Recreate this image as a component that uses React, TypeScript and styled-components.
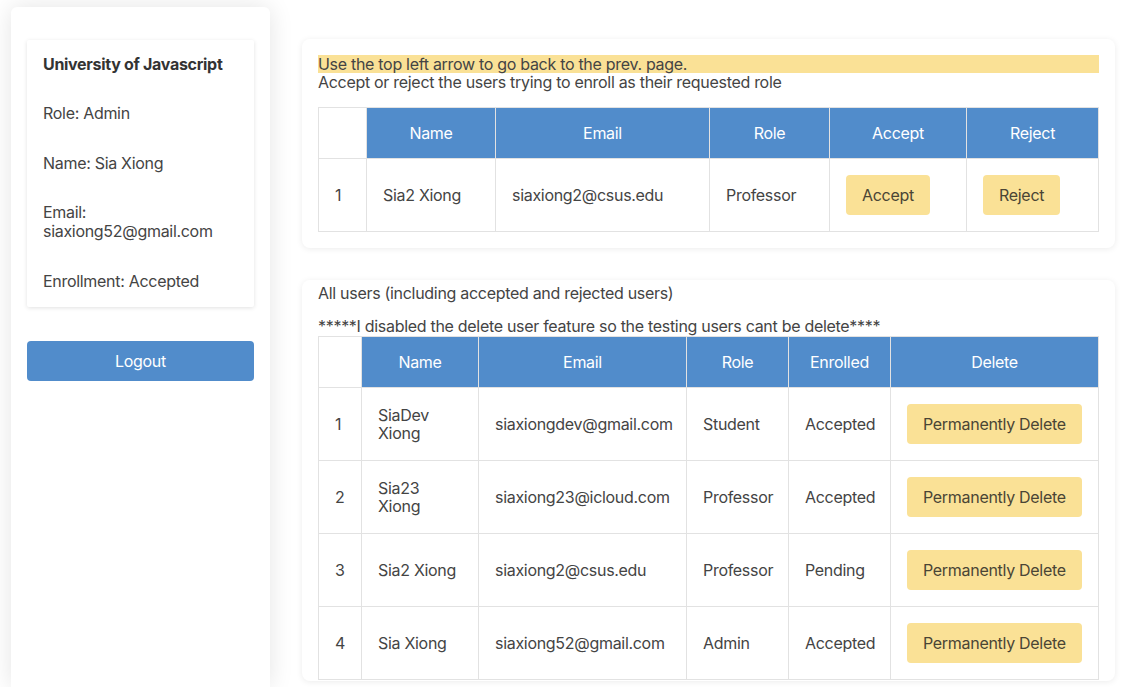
import styled, { createGlobalStyle } from 'styled-components';

const GlobalStyle = createGlobalStyle`
  * { box-sizing: border-box; }
  body {
    margin: 0;
    background: #fff;
    font-family: Inter, "Noto Sans", sans-serif;
    font-size: 16px;
    letter-spacing: -0.3px;
    color: #444;
  }
`;

interface IPending {
  name: string;
  email: string;
  role: string;
}

interface IUser extends IPending {
  enrolled: string;
}

const pending: IPending[] = [
  { name: 'Sia2 Xiong', email: 'siaxiong2@csus.edu', role: 'Professor' }
];

const users: IUser[] = [
  { name: 'SiaDev Xiong', email: 'siaxiongdev@gmail.com', role: 'Student', enrolled: 'Accepted' },
  { name: 'Sia23 Xiong', email: 'siaxiong23@icloud.com', role: 'Professor', enrolled: 'Accepted' },
  { name: 'Sia2 Xiong', email: 'siaxiong2@csus.edu', role: 'Professor', enrolled: 'Pending' },
  { name: 'Sia Xiong', email: 'siaxiong52@gmail.com', role: 'Admin', enrolled: 'Accepted' }
];

export default function App() {
  return (
    <>
      <GlobalStyle />
      <Page>
        <Sidebar>
          <ProfileCard>
            <ProfileTitle>University of Javascript</ProfileTitle>
            <ProfileItem>Role: Admin</ProfileItem>
            <ProfileItem>Name: Sia Xiong</ProfileItem>
            <ProfileItem>
              Email:
              <br />
              siaxiong52@gmail.com
            </ProfileItem>
            <ProfileItem>Enrollment: Accepted</ProfileItem>
          </ProfileCard>
          <LogoutButton>Logout</LogoutButton>
        </Sidebar>

        <Main>
          <Card>
            <Highlight>Use the top left arrow to go back to the prev. page.</Highlight>
            <Note>Accept or reject the users trying to enroll as their requested role</Note>
            <Table $top={15}>
              <colgroup>
                <col style={{ width: 48 }} />
                <col style={{ width: 129 }} />
                <col style={{ width: 214 }} />
                <col style={{ width: 120 }} />
                <col style={{ width: 137 }} />
                <col />
              </colgroup>
              <thead>
                <tr>
                  <Th $blank />
                  <Th>Name</Th>
                  <Th>Email</Th>
                  <Th>Role</Th>
                  <Th>Accept</Th>
                  <Th>Reject</Th>
                </tr>
              </thead>
              <tbody>
                {pending.map((u, i) => (
                  <tr key={u.email}>
                    <Td>{i + 1}</Td>
                    <Td>{u.name}</Td>
                    <Td>{u.email}</Td>
                    <Td>{u.role}</Td>
                    <Td>
                      <ActionButton>Accept</ActionButton>
                    </Td>
                    <Td>
                      <ActionButton>Reject</ActionButton>
                    </Td>
                  </tr>
                ))}
              </tbody>
            </Table>
          </Card>

          <Card $compact>
            <Note>All users (including accepted and rejected users)</Note>
            <Note $top={15}>*****I disabled the delete user feature so the testing users cant be delete****</Note>
            <Table>
              <colgroup>
                <col style={{ width: 43 }} />
                <col style={{ width: 117 }} />
                <col style={{ width: 208 }} />
                <col style={{ width: 102 }} />
                <col style={{ width: 102 }} />
                <col />
              </colgroup>
              <thead>
                <tr>
                  <Th $blank />
                  <Th>Name</Th>
                  <Th>Email</Th>
                  <Th>Role</Th>
                  <Th>Enrolled</Th>
                  <Th>Delete</Th>
                </tr>
              </thead>
              <tbody>
                {users.map((u, i) => (
                  <tr key={u.email}>
                    <Td>{i + 1}</Td>
                    <Td>{u.name}</Td>
                    <Td>{u.email}</Td>
                    <Td>{u.role}</Td>
                    <Td>{u.enrolled}</Td>
                    <Td>
                      <ActionButton>Permanently Delete</ActionButton>
                    </Td>
                  </tr>
                ))}
              </tbody>
            </Table>
          </Card>
        </Main>
      </Page>
    </>
  );
}

const Page = styled.div`
  display: flex;
  align-items: flex-start;
  min-height: 100vh;
  overflow: hidden;
`;

const Sidebar = styled.aside`
  flex: 0 0 259px;
  margin: 7px 0 0 11px;
  min-height: calc(100vh - 7px);
  padding: 33px 16px;
  background: #fff;
  border-radius: 6px 6px 0 0;
  box-shadow: 0 0 24px rgba(0, 0, 0, 0.11);
  display: flex;
  flex-direction: column;
  gap: 34px;
`;

const ProfileCard = styled.div`
  display: flex;
  flex-direction: column;
  gap: 30.5px;
  padding: 14.5px 16px 16px;
  background: #fff;
  border-radius: 2px;
  box-shadow: 0 1px 4px rgba(0, 0, 0, 0.12);
  line-height: 19px;
`;

const ProfileTitle = styled.div`
  font-weight: 700;
  color: #333;
`;

const ProfileItem = styled.div`
  color: #444;
`;

const LogoutButton = styled.button`
  height: 40px;
  border: none;
  border-radius: 4px;
  background: #518ccb;
  color: #fff;
  font-family: inherit;
  font-size: 16px;
  letter-spacing: inherit;
`;

const Main = styled.main`
  width: 813px;
  margin: 39px 0 0 32px;
  display: flex;
  flex-direction: column;
  gap: 32px;
`;

const Card = styled.section<{ $compact?: boolean }>`
  background: #fff;
  border-radius: 8px;
  box-shadow: 0 1px 6px rgba(0, 0, 0, 0.08);
  padding: ${(p) => (p.$compact ? '4px 16px 1px' : '16px 16px 16px')};
`;

const Highlight = styled.div`
  background: #fae196;
  line-height: 18.4px;
  color: #444;
`;

const Note = styled.div<{ $top?: number }>`
  margin-top: ${(p) => p.$top ?? 0}px;
  line-height: 18.4px;
  color: #444;
`;

const Table = styled.table<{ $top?: number }>`
  width: 100%;
  margin-top: ${(p) => p.$top ?? 0}px;
  border-collapse: collapse;
  table-layout: fixed;
  line-height: 18px;
`;

const Th = styled.th<{ $blank?: boolean }>`
  padding: 16px;
  font-weight: 400;
  text-align: center;
  color: #fff;
  background: ${(p) => (p.$blank ? '#fff' : '#518ccb')};
  border: 1px solid #e2e2e2;
`;

const Td = styled.td`
  padding: 16px;
  text-align: left;
  color: #444;
  border: 1px solid #e2e2e2;
`;

const ActionButton = styled.button`
  height: 40px;
  padding: 0 16px;
  border: none;
  border-radius: 4px;
  background: #fae196;
  color: #4a4535;
  font-family: inherit;
  font-size: 16px;
  letter-spacing: inherit;
  white-space: nowrap;
`;
